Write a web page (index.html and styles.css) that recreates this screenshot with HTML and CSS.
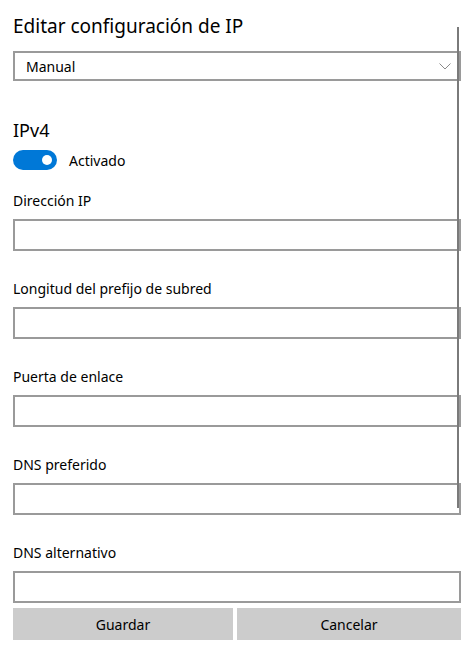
FILE: index.html
```html
<!DOCTYPE html>
<html lang="es">
<head>
<meta charset="utf-8">
<title>Editar configuración de IP</title>
<link rel="stylesheet" href="styles.css">
</head>
<body>
<div class="page">
  <h1 class="title">Editar configuración de IP</h1>
  <div class="select">
    <span class="select-value">Manual</span>
    <svg class="chevron" width="12" height="7" viewBox="0 0 12 7"><path d="M0.5 0.5 L6 6 L11.5 0.5" fill="none" stroke="#8a8a8a" stroke-width="1"/></svg>
  </div>
  <h2 class="section">IPv4</h2>
  <div class="toggle-row">
    <span class="toggle"><span class="knob"></span></span>
    <span class="toggle-label">Activado</span>
  </div>
  <div class="field field-first">
    <label class="label">Dirección IP</label>
    <div class="input"></div>
  </div>
  <div class="field">
    <label class="label">Longitud del prefijo de subred</label>
    <div class="input"></div>
  </div>
  <div class="field">
    <label class="label">Puerta de enlace</label>
    <div class="input"></div>
  </div>
  <div class="field">
    <label class="label">DNS preferido</label>
    <div class="input"></div>
  </div>
  <div class="field">
    <label class="label">DNS alternativo</label>
    <div class="input"></div>
  </div>
  <div class="buttons">
    <button class="btn">Guardar</button>
    <button class="btn">Cancelar</button>
  </div>
  <div class="scrollbar"></div>
</div>
</body>
</html>
```
FILE: styles.css
```css
* { box-sizing: border-box; }
html, body { margin: 0; padding: 0; background: #fff; }
body {
  font-family: "Noto Sans", "Open Sans", "Liberation Sans", sans-serif;
  color: #000;
  width: 476px;
  height: 662px;
  overflow: hidden;
}
.page {
  position: relative;
  padding: 12px 15px 0 13px;
}
.title {
  margin: 0;
  font-size: 19px;
  font-weight: 400;
  line-height: 28px;
}
.select {
  margin-top: 11px;
  height: 30px;
  border: 2px solid #9a9a9a;
  display: flex;
  align-items: center;
  justify-content: space-between;
  padding: 0 8px 0 11px;
}
.select-value { font-size: 14px; }
.chevron { display: block; }
.section {
  margin: 36px 0 0;
  font-size: 18px;
  font-weight: 400;
  line-height: 26px;
}
.toggle-row {
  margin-top: 7px;
  display: flex;
  align-items: center;
  gap: 12px;
  height: 20px;
}
.toggle {
  width: 44px;
  height: 20px;
  border-radius: 10px;
  background: #0078d7;
  display: flex;
  align-items: center;
  justify-content: flex-end;
  padding-right: 5px;
}
.knob {
  width: 10px;
  height: 10px;
  border-radius: 50%;
  background: #fff;
}
.toggle-label { font-size: 14px; }
.field { margin-top: 28px; }
.field-first { margin-top: 21px; }
.label {
  display: block;
  font-size: 14px;
  line-height: 20px;
}
.input {
  margin-top: 8px;
  height: 32px;
  border: 2px solid #9a9a9a;
}
.buttons {
  margin-top: 5px;
  display: grid;
  grid-template-columns: 220px 1fr;
  gap: 4px;
}
.btn {
  height: 32px;
  border: 0;
  background: #cccccc;
  font-family: inherit;
  font-size: 14px;
  color: #000;
  padding: 0;
}
.scrollbar {
  position: absolute;
  left: 457px;
  top: 27px;
  width: 2px;
  height: 481px;
  background: #7a7a7a;
}
```
